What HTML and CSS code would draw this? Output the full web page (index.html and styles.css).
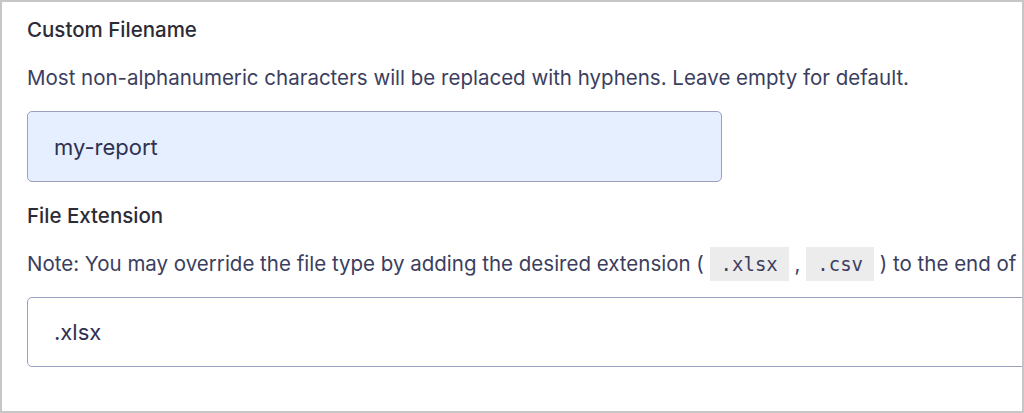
FILE: index.html
```html
<!DOCTYPE html>
<html lang="en">
<head>
  <meta charset="UTF-8" />
  <title>Export Settings</title>
  <link rel="stylesheet" href="styles.css">
</head>
<body>

  <div class="panel">
    <div class="field">
      <label class="field-label" for="filename">Custom Filename</label>
      <p class="field-desc">Most non-alphanumeric characters will be replaced with hyphens. Leave empty for default.</p>
      <input id="filename" class="text-input short filled" type="text" value="my-report">
    </div>

    <div class="field">
      <label class="field-label" for="extension">File Extension</label>
      <p class="field-desc nowrap">Note: You may override the file type by adding the desired extension ( <code>.xlsx</code> , <code>.csv</code> ) to the end of the filename.</p>
      <input id="extension" class="text-input wide" type="text" value=".xlsx">
    </div>
  </div>

</body>
</html>
```

FILE: styles.css
```css
body {
  margin: 0;
  font-family: Inter, "Open Sans", sans-serif;
}
.panel {
  box-sizing: border-box;
  width: 1024px;
  height: 413px;
  border: 2px solid #c6c6c6;
  padding: 13px 0 0 25px;
  overflow: hidden;
  background: #fff;
}
.field-label {
  display: block;
  font-size: 20.5px;
  line-height: 30px;
  font-weight: 500;
  color: #2c2c36;
}
.field-desc {
  margin: 18px 0 0;
  font-size: 20.5px;
  line-height: 30px;
  color: #3b3e5e;
}
.nowrap {
  white-space: nowrap;
}
code {
  font-family: "DejaVu Sans Mono", monospace;
  font-size: 19px;
  background: #ececec;
  padding: 6px 11px;
  color: #3b3e5e;
}
.text-input {
  display: block;
  box-sizing: border-box;
  height: 71px;
  margin: 18px 0 19px;
  padding: 0 26px;
  border: 1.5px solid #9c9fc0;
  border-radius: 5px;
  font-family: inherit;
  font-size: 22px;
  color: #2f3152;
  outline: none;
}
.short {
  width: 695px;
}
.wide {
  width: 1100px;
  height: 70px;
}
.filled {
  background: #e6efff;
}
```
